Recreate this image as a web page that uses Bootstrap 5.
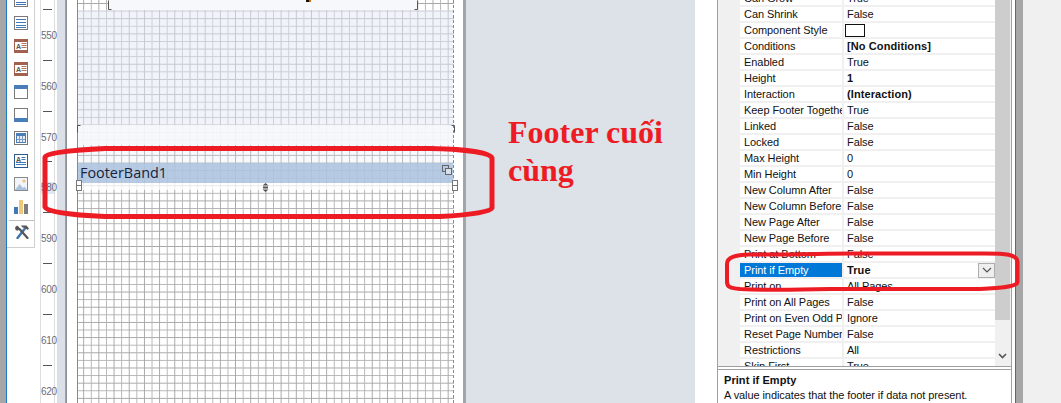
<!DOCTYPE html>
<html lang="vi">
<head>
<meta charset="utf-8">
<title>Footer band</title>
<link href="https://cdn.jsdelivr.net/npm/bootstrap@5.3.0/dist/css/bootstrap.min.css" rel="stylesheet">
<style>
html,body{margin:0;height:403px;overflow:hidden;background:#fff}
body{position:relative;font-family:"Liberation Sans",Arial,sans-serif;font-size:11px;color:#111}
.shell{width:1061px;height:403px}
.edge{width:6px;background:#a6a6a6}
.toolcol{width:34px;border-left:1px solid #1b7cc4}
.toolbox{width:28px;height:255px;border-right:1px solid #cfcfcf;border-bottom:1px solid #cfcfcf;margin-top:-7px;gap:9px;padding-left:7px}
.toolbox svg{display:block;flex:none}
.toolsep{border-top:1px solid #bdbdbd;width:25px;margin:-3px 0 -6px -5px}
.rule{width:15px;border-left:1px solid #dedede;border-right:1px solid #dedede}
.rulecell{height:50.8px;flex:none;position:relative;color:#6b6b78;font-size:10px;line-height:12px;text-align:center;letter-spacing:-.3px;padding-top:21px}
.rulecell::before{content:"";display:block;position:absolute;left:2px;top:0;width:9px;height:1px;background:#555}
.rulecell.hl span{background:#dce8f6;display:block;height:12px}
.rulewrap{margin-top:9px}
.steel{width:8px;margin-left:2px;background:#dbe0e8}
.steeledge{width:2px;background:linear-gradient(90deg,#a4a7ab,#85888c)}
.pagegap{width:10px}
.sheet{width:377px;border-left:1px solid #8a8a8a;border-right:1px dashed #8a8a8a;
background-color:#fff;
background-image:
linear-gradient(90deg,#a6a6a6 1px,transparent 1px),
linear-gradient(90deg,#b6b6b6 1px,transparent 1px),
linear-gradient(#a6a6a6 1px,transparent 1px),
linear-gradient(#b6b6b6 1px,transparent 1px);
background-size:15.2px 100%,15.2px 100%,100% 15.2px,100% 15.2px;
background-position:5.200px 0,12.800px 0,0 3px,0 10.600px;position:relative}
.topclip{height:10px}
.topfill{margin-left:31px;width:309px;height:10px;background:#f6f8fc;position:relative}
.ink{position:absolute;left:197px;top:0;width:5px;height:2px;background:#1a1000;border-right:2px solid #d06a10}
.tint{height:115px;background:rgba(225,232,246,.5)}
.pale{height:20px;background:rgba(246,248,252,.93)}
.plain{height:18px;background:rgba(225,232,246,.25)}
.bandlabel{height:20px;background:rgba(175,196,224,.9);font-family:"Open Sans",sans-serif;font-size:14.4px;line-height:20px;padding-left:2px;color:#16233a;position:relative}
.whitewash{height:7px;background:rgba(255,255,255,.75)}
.gap9{width:9px}
.divbar{width:3px;background:#a3a5a8}
.greyzone{width:229px;background:#dde1e8;padding:113px 0 0 42px;font-family:"Liberation Serif",serif;font-weight:700;font-size:32px;line-height:38px;color:#ed1c24}
.propgap{width:22px}
.proppane{width:295px;border-left:1px solid #a0a0a0;border-right:1px solid #a0a0a0;box-shadow:inset 1px 0 0 #fff,inset -1px 0 0 #fff}
.proptop{flex:none;height:367px;border-bottom:1px solid #a0a0a0;background:#f0f0f0;overflow:hidden;padding-left:22px}
.proprows{width:255px;margin-top:-9px;background:#fff}
.prow{height:16px;line-height:15px;border-bottom:2px solid #f0f0f0}
.pname{width:104px;padding-left:4px;border-right:2px solid #f0f0f0;overflow:hidden;white-space:nowrap;flex:none;letter-spacing:-.06px}
.pval{padding-left:3px;flex:1;white-space:nowrap;letter-spacing:-.08px;position:relative}
.pval.fw-bold{letter-spacing:.1px}
.pick .pname{background:#0078d7;color:#fff}
.swatch{display:inline-block;width:20px;height:13px;border:1px solid #111;background:#fff;margin-left:-2px;margin-top:1px}
.combo{position:absolute;right:0;top:0;width:17px;height:15px;background:#eee;border:1px solid #adadad}
.combo svg{display:block;margin:3px auto 0}
.sbar{width:15px;background:#f0f0f0}
.sthumb{height:320px;background:#cdcdcd}
.schev{padding-top:33px;padding-left:3px}
.descgap{flex:none;height:2px}
.descbox{flex:1;border:1px solid #a0a0a0;border-bottom:0;padding:3px 6px;line-height:15px;margin:0 -1px}
.descbox p{margin:0;letter-spacing:-.08px;white-space:nowrap}
.descbox p.fw-bold{letter-spacing:.06px}
.after{width:3px}
.bluebar{width:1px;background:#1b7cc4}
.grey2{width:7px;background:#a6a6a6}
.restfill{flex:1;background:#f0f0f0}
.mark-svg{position:absolute;left:0;top:0;pointer-events:none}
</style>
</head>
<body>
<svg width="0" height="0" class="d-block position-absolute">
<defs>
<symbol id="i-lines" viewBox="0 0 14 14"><rect x=".5" y=".5" width="13" height="13" fill="#fff" stroke="#7a7a7a"/><path d="M2 3.500h10M2 6.500h10M2 9.500h10M2 11.500h10" stroke="#3f7ab8"/></symbol>
<symbol id="i-label" viewBox="0 0 14 14"><rect width="14" height="14" fill="#a2614e"/><rect x="1" y="3" width="12" height="8" fill="#fff"/><text x="2" y="9.600" font-size="7" font-weight="700" fill="#555" font-family="Liberation Sans">A</text><path d="M7.500 4.500h5M7.500 6.500h5M7.500 8.500h5" stroke="#b5725f"/></symbol>
<symbol id="i-head" viewBox="0 0 14 14"><rect x=".5" y=".5" width="13" height="13" fill="#fff" stroke="#7a7a7a"/><rect width="14" height="4" fill="#4a7eb8"/></symbol>
<symbol id="i-foot" viewBox="0 0 14 14"><rect x=".5" y=".5" width="13" height="13" fill="#fff" stroke="#7a7a7a"/><rect y="10" width="14" height="4" fill="#4a7eb8"/></symbol>
<symbol id="i-cal" viewBox="0 0 14 14"><rect x=".5" y=".5" width="13" height="13" fill="#fff" stroke="#777"/><rect x="2" y="2" width="10" height="10" fill="#4a7eb8"/><rect x="3" y="5" width="8" height="6" fill="#e4ecf6"/><path d="M5.500 5v6M8.500 5v6M3 8.500h8" stroke="#7d9cc2"/></symbol>
<symbol id="i-text" viewBox="0 0 14 14"><rect x=".5" y=".5" width="13" height="13" fill="#fff" stroke="#2d5a8c"/><text x="2" y="7.600" font-size="7" font-weight="700" fill="#555" font-family="Liberation Sans">A</text><path d="M7.500 3.500h4M7.500 5.500h4M2 8.500h10M2 10.500h10" stroke="#3f7ab8"/></symbol>
<symbol id="i-pic" viewBox="0 0 14 14"><rect x=".5" y=".5" width="13" height="13" fill="#f2f5f9" stroke="#8a8a8a"/><circle cx="10" cy="4" r="1.600" fill="#eec27a"/><path d="M1 13 5.500 7 9 11l1.500-1.500L13 13z" fill="#a9c2dd"/></symbol>
<symbol id="i-chart" viewBox="0 0 14 14"><rect y="7" width="4" height="7" fill="#3f78b4"/><rect x="5" width="4" height="14" fill="#eec77f"/><rect x="10" y="4" width="4" height="10" fill="#7d7d7d"/></symbol>
<symbol id="i-tools" viewBox="0 0 16 15"><path d="M3.500 14 11 4.500" stroke="#3c76b2" stroke-width="2.400" stroke-linecap="round"/><path d="M7 1.500h5.500l2.500 3-1.500 1.500L11.500 4 8.500 3.500z" fill="#555"/><path d="M13.500 14 5.500 5" stroke="#555" stroke-width="2.200" stroke-linecap="round"/><path d="M1 3.500 3 1.500 5 3l.7 2.200L3.600 6.700 1.600 6z" fill="#555"/></symbol>
</defs>
</svg>

<div class="shell d-flex">
  <div class="edge"></div>
  <div class="toolcol">
    <div class="toolbox d-flex flex-column">
      <svg width="14" height="14"><use href="#i-lines"/></svg>
      <svg width="14" height="14"><use href="#i-lines"/></svg>
      <svg width="14" height="14"><use href="#i-label"/></svg>
      <svg width="14" height="14"><use href="#i-label"/></svg>
      <svg width="14" height="14"><use href="#i-head"/></svg>
      <svg width="14" height="14"><use href="#i-foot"/></svg>
      <svg width="14" height="14"><use href="#i-cal"/></svg>
      <svg width="14" height="14"><use href="#i-text"/></svg>
      <svg width="14" height="14"><use href="#i-pic"/></svg>
      <svg width="14" height="14"><use href="#i-chart"/></svg>
      <div class="toolsep"></div>
      <svg width="16" height="15"><use href="#i-tools"/></svg>
    </div>
  </div>
  <div class="rule">
    <div class="rulewrap d-flex flex-column">
      <div class="rulecell"><span>550</span></div>
      <div class="rulecell"><span>560</span></div>
      <div class="rulecell"><span>570</span></div>
      <div class="rulecell hl"><span>580</span></div>
      <div class="rulecell"><span>590</span></div>
      <div class="rulecell"><span>600</span></div>
      <div class="rulecell"><span>610</span></div>
      <div class="rulecell"><span>620</span></div>
    </div>
  </div>
  <div class="steel"></div>
  <div class="steeledge"></div>
  <div class="pagegap"></div>
  <div class="sheet">
    <div class="topclip"><div class="topfill"><span class="ink"></span></div></div>
    <div class="tint"></div>
    <div class="pale"></div>
    <div class="plain"></div>
    <div class="bandlabel">FooterBand1</div>
    <div class="whitewash"></div>
  </div>
  <div class="gap9"></div>
  <div class="divbar"></div>
  <div class="greyzone">Footer cuối<br>cùng</div>
  <div class="propgap"></div>
  <div class="proppane d-flex flex-column">
    <div class="proptop d-flex">
      <div class="proprows">
        <div class="prow d-flex"><div class="pname">Can Grow</div><div class="pval">True</div></div>
        <div class="prow d-flex"><div class="pname">Can Shrink</div><div class="pval">False</div></div>
        <div class="prow d-flex"><div class="pname">Component Style</div><div class="pval"><span class="swatch"></span></div></div>
        <div class="prow d-flex"><div class="pname">Conditions</div><div class="pval fw-bold">[No Conditions]</div></div>
        <div class="prow d-flex"><div class="pname">Enabled</div><div class="pval">True</div></div>
        <div class="prow d-flex"><div class="pname">Height</div><div class="pval fw-bold">1</div></div>
        <div class="prow d-flex"><div class="pname">Interaction</div><div class="pval fw-bold">(Interaction)</div></div>
        <div class="prow d-flex"><div class="pname">Keep Footer Together</div><div class="pval">True</div></div>
        <div class="prow d-flex"><div class="pname">Linked</div><div class="pval">False</div></div>
        <div class="prow d-flex"><div class="pname">Locked</div><div class="pval">False</div></div>
        <div class="prow d-flex"><div class="pname">Max Height</div><div class="pval">0</div></div>
        <div class="prow d-flex"><div class="pname">Min Height</div><div class="pval">0</div></div>
        <div class="prow d-flex"><div class="pname">New Column After</div><div class="pval">False</div></div>
        <div class="prow d-flex"><div class="pname">New Column Before</div><div class="pval">False</div></div>
        <div class="prow d-flex"><div class="pname">New Page After</div><div class="pval">False</div></div>
        <div class="prow d-flex"><div class="pname">New Page Before</div><div class="pval">False</div></div>
        <div class="prow d-flex"><div class="pname">Print at Bottom</div><div class="pval">False</div></div>
        <div class="prow d-flex pick"><div class="pname">Print if Empty</div><div class="pval fw-bold">True<span class="combo"><svg width="10" height="6" viewBox="0 0 10 6"><path d="M1 1l4 4 4-4" fill="none" stroke="#555" stroke-width="1.200"/></svg></span></div></div>
        <div class="prow d-flex"><div class="pname">Print on</div><div class="pval">All Pages</div></div>
        <div class="prow d-flex"><div class="pname">Print on All Pages</div><div class="pval">False</div></div>
        <div class="prow d-flex"><div class="pname">Print on Even Odd Pages</div><div class="pval">Ignore</div></div>
        <div class="prow d-flex"><div class="pname">Reset Page Number</div><div class="pval">False</div></div>
        <div class="prow d-flex"><div class="pname">Restrictions</div><div class="pval">All</div></div>
        <div class="prow d-flex"><div class="pname">Skip First</div><div class="pval">True</div></div>
      </div>
      <div class="sbar">
        <div class="sthumb"></div>
        <div class="schev"><svg class="d-block" width="9" height="6" viewBox="0 0 9 6"><path d="M1 1l3.500 3.500L8 1" fill="none" stroke="#555" stroke-width="1.600"/></svg></div>
      </div>
    </div>
    <div class="descgap"></div>
    <div class="descbox">
      <p class="fw-bold">Print if Empty</p>
      <p>A value indicates that the footer if data not present.</p>
    </div>
  </div>
  <div class="after"></div>
  <div class="bluebar"></div>
  <div class="grey2"></div>
  <div class="restfill"></div>
</div>

<svg class="mark-svg" width="1061" height="403" viewBox="0 0 1061 403">
  <path d="M108 0v9h3M417 0v9h-3M77 132v-7h3M454 132v-7h-3" fill="none" stroke="#555" stroke-width="1" transform="translate(.5 .5)"/>
  <g fill="#fff" stroke="#777"><rect x="76.500" y="180.500" width="5" height="10"/><rect x="452.500" y="180.500" width="5" height="10"/></g>
  <path d="M77 185.500h4M453 185.500h4" stroke="#777"/>
  <g fill="none" stroke="#666"><rect x="442.500" y="165.500" width="6" height="6"/><rect x="445.500" y="168.500" width="6" height="6" fill="#d8e0ec"/></g>
  <path d="M265.500 183l3 2.500h-6zM265.500 192l3-2.500h-6z" fill="#555"/><rect x="263" y="186.500" width="5" height="2" fill="#555"/>
  <path d="M45 157C46 153 72 150 105 148.500 H430 C460 149 490 152 492 158 V208 C490 212 470 215 440 216.500 H105 C70 215 47 212 45 207 Z" fill="none" stroke="#ed1c24" stroke-width="5"/>
  <path d="M727 264C727 257 735 255 750 254.500 C800 255 830 253 860 253.500 H985 C1005 253.500 1017 254 1017.500 262 V282 C1017 287 1000 288 980 289 H830 C790 290 760 290 740 289 C730 288 727 287 727 282 Z" fill="none" stroke="#ed1c24" stroke-width="4"/>
</svg>
<script src="https://cdn.jsdelivr.net/npm/bootstrap@5.3.0/dist/js/bootstrap.bundle.min.js"></script>
</body>
</html>
